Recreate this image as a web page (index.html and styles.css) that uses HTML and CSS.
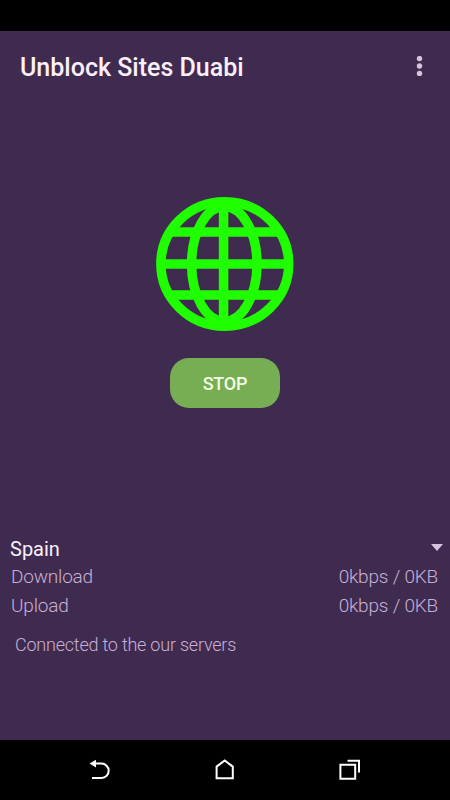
FILE: index.html
```html
<!DOCTYPE html>
<html lang="en">
<head>
<meta charset="utf-8">
<title>Unblock Sites Duabi</title>
<link rel="stylesheet" href="styles.css">
</head>
<body>
<div class="statusbar"></div>
<header class="toolbar">
  <h1 class="title">Unblock Sites Duabi</h1>
  <svg class="more" width="8" height="22" viewBox="0 0 8 22"><circle cx="3.5" cy="2.6" r="2.7"/><circle cx="3.5" cy="10" r="2.7"/><circle cx="3.5" cy="17.4" r="2.7"/></svg>
</header>
<main class="content">
  <svg class="globe" width="138" height="134" viewBox="0 0 138 134">
    <ellipse cx="68.8" cy="67" rx="63.9" ry="62.2"/>
    <ellipse cx="68.3" cy="67" rx="32.7" ry="57.4"/>
    <path d="M67.6 6v122M6 67h126M16 35h106M16 98h106"/>
  </svg>
  <button class="stop">STOP</button>
  <section class="stats">
    <div class="row country"><span>Spain</span><svg width="12" height="7" viewBox="0 0 12 7"><path d="M0 0h12L6 7z"/></svg></div>
    <div class="row"><span>Download</span><span>0kbps / 0KB</span></div>
    <div class="row"><span>Upload</span><span>0kbps / 0KB</span></div>
    <p class="message">Connected to the our servers</p>
  </section>
</main>
<nav class="navbar">
  <svg width="24" height="24" viewBox="0 0 24 24"><path d="M5 5.6h8.5a7 7 0 0 1 0 14.4H4"/><path class="solid" d="M1.5 5.6L8 1.8v7.6z"/></svg>
  <svg width="24" height="24" viewBox="0 0 24 24"><path d="M3.6 20.2V8.6L11.7 2.5l8.1 6.1v11.6z"/></svg>
  <svg width="24" height="24" viewBox="0 0 24 24"><path d="M2.4 6.8h14.8v14H2.4zM9.5 2.8h11.5v11.6"/></svg>
</nav>
</body>
</html>
```
FILE: styles.css
```css
* {
  box-sizing: border-box;
}

body {
  margin: 0;
  height: 800px;
  display: flex;
  flex-direction: column;
  background: #402b50;
  font-family: Roboto, "Liberation Sans", sans-serif;
  overflow: hidden;
}

.statusbar {
  height: 31px;
  background: #000;
}

.toolbar {
  height: 72px;
  padding: 0 26px 0 20px;
  display: flex;
  align-items: center;
  justify-content: space-between;
}

.title {
  margin: 0;
  padding-top: 2px;
  font-size: 25px;
  font-weight: 500;
  line-height: 30px;
  color: #fbeffc;
}

.more {
  fill: #d6c4de;
}

.content {
  flex: 1;
  padding-top: 94px;
  display: flex;
  flex-direction: column;
  align-items: center;
}

.globe {
  fill: none;
  stroke: #20ff00;
  stroke-width: 9.5;
}

.stop {
  width: 110px;
  height: 50px;
  margin-top: 27px;
  padding: 0 0 0 0;
  border: 0;
  border-radius: 19px;
  background: #78ae53;
  color: #f3ffe4;
  font: 500 18px Roboto, "Liberation Sans", sans-serif;
  letter-spacing: -0.2px;
}

.stats {
  align-self: stretch;
  margin-top: 126px;
  padding: 0 12px 0 11px;
}

.row {
  height: 29px;
  display: flex;
  align-items: center;
  justify-content: space-between;
  font-size: 19px;
  font-weight: 300;
  letter-spacing: -0.2px;
  color: #c8b0d4;
}

.country {
  height: 28px;
  margin: 0 -5px 0 -1px;
  font-size: 20px;
  font-weight: 400;
  letter-spacing: 0;
  color: #fbeffc;
}

.country span {
  padding-top: 2px;
}

.country svg {
  margin-bottom: 2px;
  fill: #d6c4de;
}

.message {
  margin: 14px 0 0 4px;
  font-size: 18px;
  font-weight: 300;
  line-height: 22px;
  letter-spacing: -0.22px;
  color: #c8b0d4;
}

.navbar {
  height: 60px;
  padding: 0 88px;
  display: flex;
  align-items: center;
  justify-content: space-between;
  background: #000;
}

.navbar svg {
  fill: none;
  stroke: #fff;
  stroke-width: 2;
}

.navbar .solid {
  fill: #fff;
  stroke: none;
}
```
